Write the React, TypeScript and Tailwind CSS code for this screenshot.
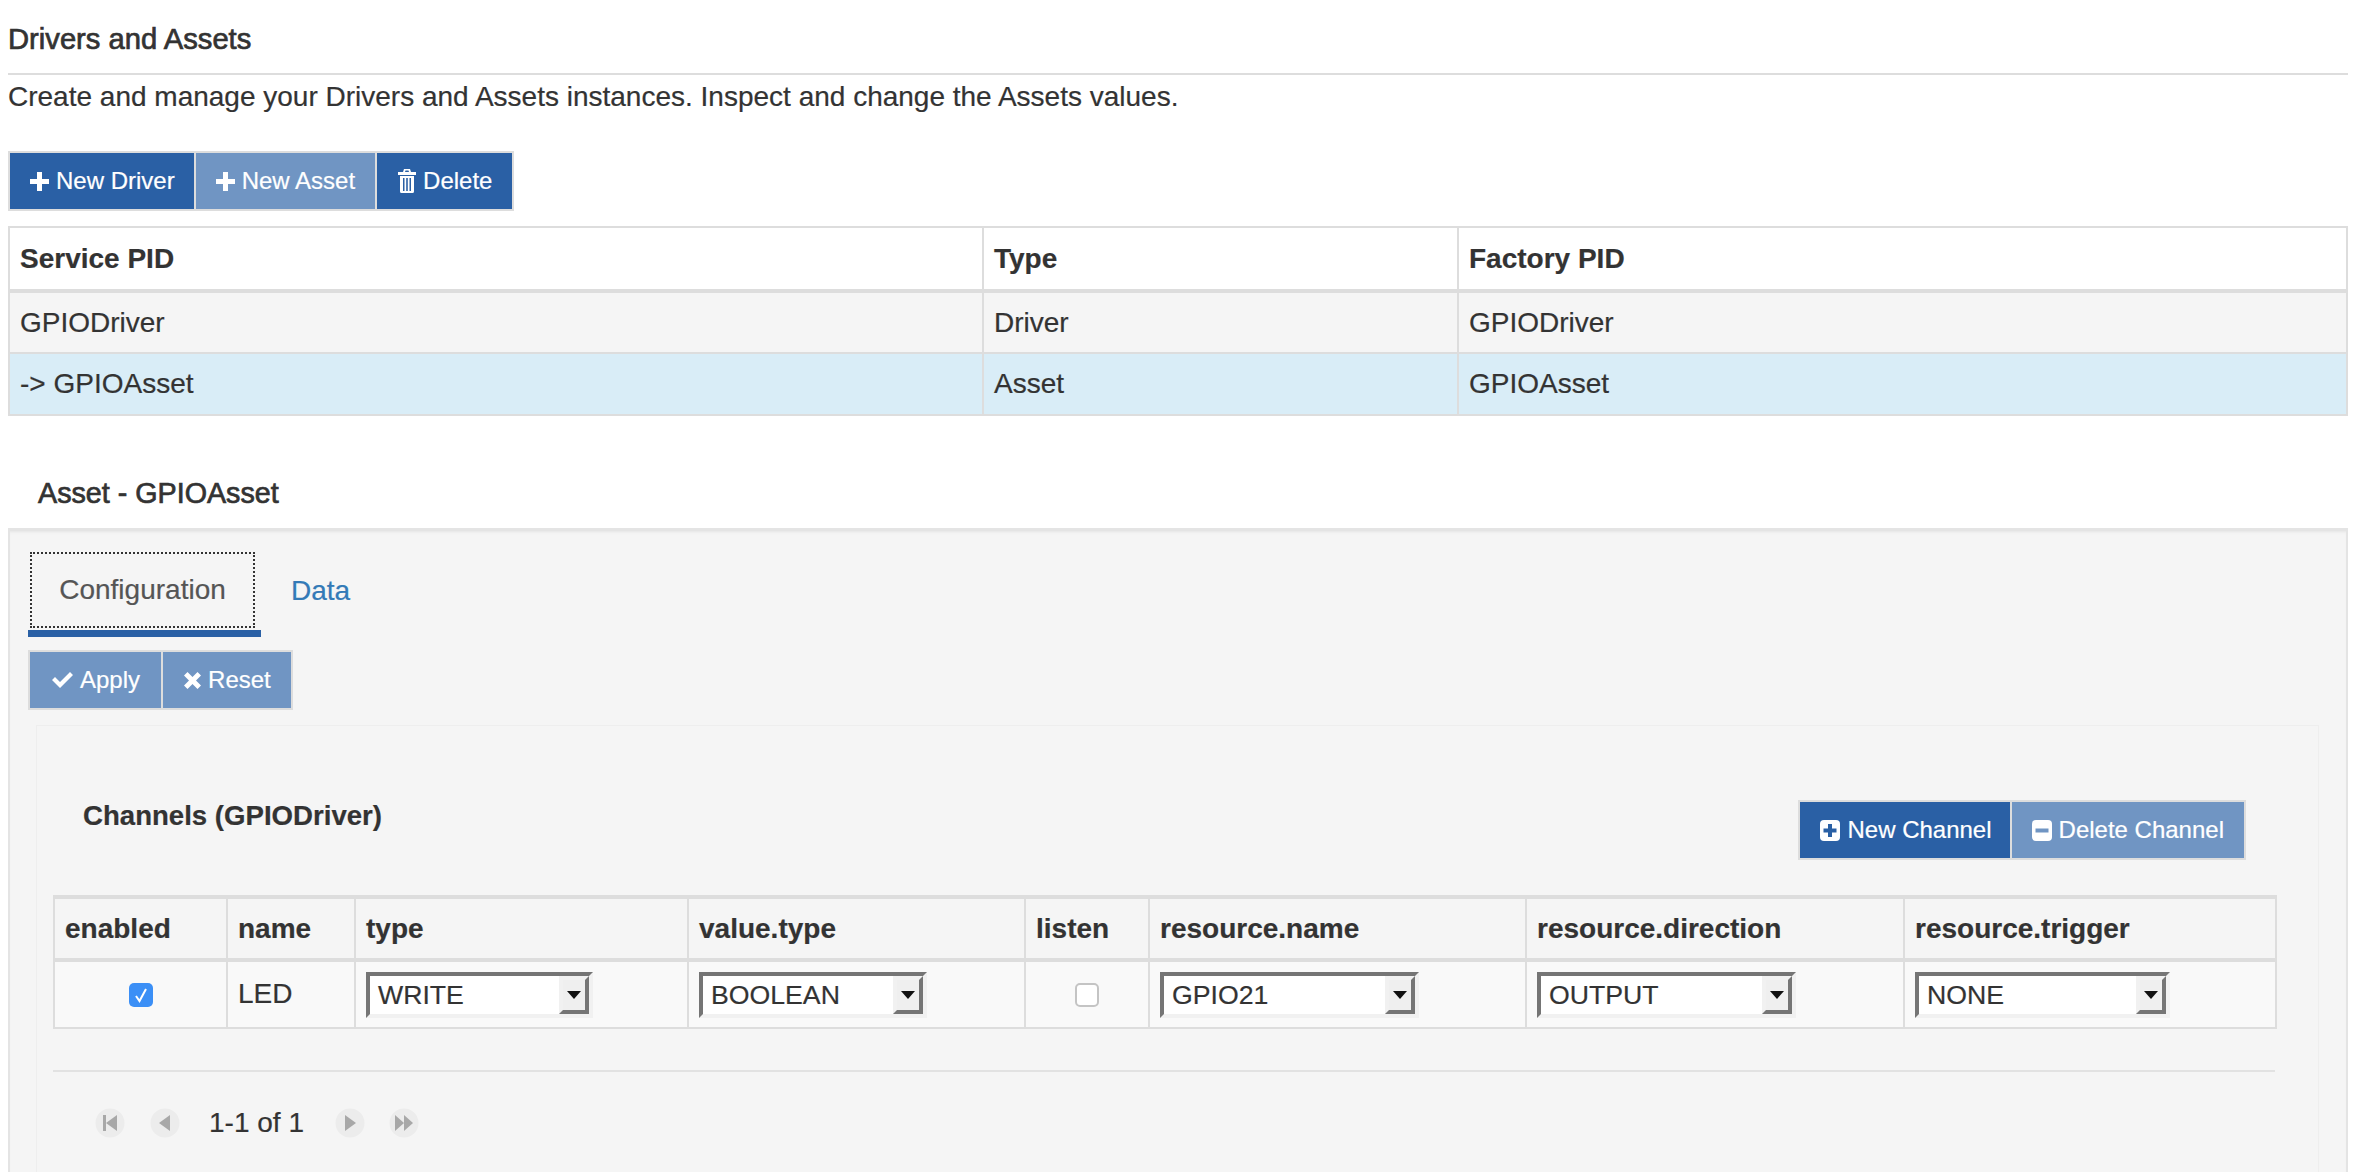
import * as React from "react";

const font = "font-['Liberation_Sans',Arial,sans-serif]";
const medium = "[-webkit-text-stroke:0.7px_#333]";

function PlusIcon() {
  return (
    <svg width="19" height="19" viewBox="0 0 19 19" fill="#fff">
      <path d="M7 0h5v7h7v5h-7v7H7v-7H0V7h7z" />
    </svg>
  );
}

function TrashIcon() {
  return (
    <svg width="18" height="24" viewBox="0 0 18 24" fill="#fff">
      <path d="M6 0h6l1 3h5v3H0V3h5zM7.500 1.500 7 3h4l-.5-1.500z" />
      <path fillRule="evenodd" d="M2 7h14v15.500a1.500 1.500 0 0 1-1.500 1.500h-11A1.500 1.500 0 0 1 2 22.500zM5 9v13h1.500V9zM8.200 9v13h1.600V9zM11.500 9v13H13V9z" />
    </svg>
  );
}

function CheckIcon() {
  return (
    <svg width="21" height="16" viewBox="0 0 21 16" fill="#fff">
      <path d="M8 16 0 8l3-3 5 5L18 0l3 3z" />
    </svg>
  );
}

function CrossIcon() {
  return (
    <svg width="17" height="17" viewBox="0 0 17 17" fill="#fff">
      <path d="M3.500 0 8.500 5l5-5L17 3.500l-5 5 5 5L13.500 17l-5-5-5 5L0 13.500l5-5-5-5z" />
    </svg>
  );
}

function PlusSignIcon() {
  return (
    <svg width="20" height="21" viewBox="0 0 20 21">
      <rect width="20" height="21" rx="4" fill="#fff" />
      <path d="M8 4h4v4.500h4.500v4H12V17H8v-4.500H3.500v-4H8z" fill="#2a60a5" />
    </svg>
  );
}

function MinusSignIcon() {
  return (
    <svg width="20" height="21" viewBox="0 0 20 21">
      <rect width="20" height="21" rx="4" fill="#fff" />
      <rect x="3.500" y="8.500" width="13" height="4" fill="#7095c3" />
    </svg>
  );
}

function ToolButton({
  label,
  icon,
  disabled,
  className,
}: {
  label: string;
  icon: React.ReactNode;
  disabled?: boolean;
  className?: string;
}) {
  return (
    <div
      className={`flex h-[56px] items-center gap-[7px] text-[24px] text-white ${
        disabled ? "bg-[#7095c3]" : "bg-[#2a60a5]"
      } ${className ?? ""}`}
    >
      {icon}
      <span>{label}</span>
    </div>
  );
}

function PagerIcon({ kind }: { kind: "first" | "prev" | "next" | "last" }) {
  return (
    <svg width="30" height="30" viewBox="0 0 30 30">
      <circle cx="15" cy="15" r="14.500" fill="#ececec" />
      <g fill="#a8a8a8">
        {kind === "first" && <path d="M8 7h3v16H8zM22 7v16L11 15z" />}
        {kind === "prev" && <path d="M20 7v16L9 15z" />}
        {kind === "next" && <path d="M10 7v16l11-8z" />}
        {kind === "last" && <path d="M6 7v16l9-8zM15 7v16l9-8z" />}
      </g>
    </svg>
  );
}

function FakeSelect({ value, width }: { value: string; width: string }) {
  return (
    <div
      className={`flex h-[46px] border-4 border-t-[#757575] border-r-[#f1f1f1] border-b-[#f1f1f1] border-l-[#757575] bg-white text-[26.67px] text-[#333] ${width}`}
    >
      <div className="flex-1 pl-2 leading-[38px]">{value}</div>
      <div className="flex w-[30px] items-center justify-center border-4 border-t-[#f1f1f1] border-r-[#757575] border-b-[#757575] border-l-[#f1f1f1] bg-[#efefef]">
        <svg width="14" height="8" viewBox="0 0 14 8" className="shrink-0">
          <path d="M0 0h14L7 8z" fill="#111" />
        </svg>
      </div>
    </div>
  );
}

const assets = [
  { pid: "GPIODriver", type: "Driver", factory: "GPIODriver", row: "bg-[#f5f5f5]" },
  { pid: "-> GPIOAsset", type: "Asset", factory: "GPIOAsset", row: "bg-[#d9edf7]" },
];

const channelCols = [
  { name: "enabled", w: "w-[173px]" },
  { name: "name", w: "w-[128px]" },
  { name: "type", w: "w-[333px]" },
  { name: "value.type", w: "w-[337px]" },
  { name: "listen", w: "w-[124px]" },
  { name: "resource.name", w: "w-[377px]" },
  { name: "resource.direction", w: "w-[378px]" },
  { name: "resource.trigger", w: "w-[372px]" },
];

const td = "border-x-2 border-b-2 border-[#ddd] px-[10px] align-middle";

export default function App() {
  return (
    <div className={`h-[1172px] overflow-hidden bg-white pr-5 pl-2 text-[28px] text-[#333] [-webkit-text-stroke-width:0.2px] ${font}`}>
      <div className={`border-b-2 border-[#ddd] pt-[24px] pb-[18px] text-[29.2px] leading-[31px] ${medium}`}>
        Drivers and Assets
      </div>
      <div className="mt-[6px] leading-[32px]">
        Create and manage your Drivers and Assets instances. Inspect and change the Assets values.
      </div>

      <div className="mt-[38px] flex w-fit border-2 border-[#ddd]">
        <ToolButton label="New Driver" icon={<PlusIcon />} className="pr-[19px] pl-5" />
        <ToolButton label="New Asset" icon={<PlusIcon />} disabled className="border-l-2 border-[#ddd] pr-5 pl-5" />
        <ToolButton label="Delete" icon={<TrashIcon />} className="gap-2 border-l-2 border-[#ddd] pr-5 pl-[21px]" />
      </div>

      <table className="mt-[15px] w-full table-fixed border-collapse">
        <thead>
          <tr className="h-[64px] bg-white text-left">
            <th className="w-[974px] border-x-2 border-t-2 border-b-4 border-[#ddd] px-[10px] font-bold">Service PID</th>
            <th className="w-[475px] border-x-2 border-t-2 border-b-4 border-[#ddd] px-[10px] font-bold">Type</th>
            <th className="border-x-2 border-t-2 border-b-4 border-[#ddd] px-[10px] font-bold">Factory PID</th>
          </tr>
        </thead>
        <tbody>
          {assets.map((a) => (
            <tr key={a.pid} className={`h-[62px] ${a.row}`}>
              <td className={td}>{a.pid}</td>
              <td className={td}>{a.type}</td>
              <td className={td}>{a.factory}</td>
            </tr>
          ))}
        </tbody>
      </table>

      <div className={`mt-[61px] pl-[30px] text-[28.7px] leading-[32px] ${medium}`}>Asset - GPIOAsset</div>

      <div className="mt-[19px] h-[700px] border-x-2 border-t-[3px] border-[#e4e4e4] bg-[#f5f5f5] pt-[21px] pl-[18px] shadow-[inset_0_3px_3px_-2px_#e4e4e4]">
        <div className="flex">
          <div className="w-[233px] border-b-[7px] border-[#2a60a5] pb-[2px]">
            <div className="ml-[2px] flex h-[76px] w-[225px] items-center justify-center border-2 border-dotted border-[#333] text-[#555]">
              Configuration
            </div>
          </div>
          <div className="ml-[30px] flex h-[78px] items-center text-[#337ab7]">Data</div>
        </div>

        <div className="mt-[13px] flex w-fit border-2 border-[#ddd]">
          <ToolButton label="Apply" icon={<CheckIcon />} disabled className="pr-[21px] pl-[22px]" />
          <ToolButton label="Reset" icon={<CrossIcon />} disabled className="gap-2 border-l-2 border-[#ddd] pr-[20px] pl-[21px]" />
        </div>

        <div className="mt-[15px] mr-[27px] ml-2 h-[500px] border border-[#eeeeee] bg-[#f5f5f5] pr-[43px] pl-4">
          <div className="flex items-start justify-between pr-[29px]">
            <div className="mt-[74px] pl-[30px] text-[27.6px] leading-[32px] font-bold">Channels (GPIODriver)</div>
            <div className="mt-[74px] flex border-2 border-[#ddd]">
              <ToolButton label="New Channel" icon={<PlusSignIcon />} className="pr-[18px] pl-5" />
              <ToolButton label="Delete Channel" icon={<MinusSignIcon />} disabled className="border-l-2 border-[#ddd] pr-5 pl-5" />
            </div>
          </div>

          <table className="mt-[35px] w-full table-fixed border-collapse">
            <thead>
              <tr className="h-[63px] bg-[#f5f5f5] text-left">
                {channelCols.map((c) => (
                  <th key={c.name} className={`${c.w} border-x-2 border-y-4 border-[#ddd] px-[10px] font-bold`}>
                    {c.name}
                  </th>
                ))}
              </tr>
            </thead>
            <tbody>
              <tr className="h-[68px] bg-[#f9f9f9]">
                <td className={td}>
                  <div className="mx-auto flex h-[24px] w-[24px] items-center justify-center rounded-[5px] bg-[#3b8ff6]">
                    <svg width="14" height="16" viewBox="0 0 14 16" fill="none">
                      <path d="M2 9l3.500 5L12 2" stroke="#fff" strokeWidth="2" />
                    </svg>
                  </div>
                </td>
                <td className={`${td} pb-[2px]`}>LED</td>
                <td className={td}>
                  <FakeSelect value="WRITE" width="w-[227px]" />
                </td>
                <td className={td}>
                  <FakeSelect value="BOOLEAN" width="w-[228px]" />
                </td>
                <td className={td}>
                  <div className="mx-auto h-[24px] w-[24px] rounded-[5px] border-2 border-[#c4c4c4] bg-white" />
                </td>
                <td className={td}>
                  <FakeSelect value="GPIO21" width="w-[259px]" />
                </td>
                <td className={td}>
                  <FakeSelect value="OUTPUT" width="w-[259px]" />
                </td>
                <td className={td}>
                  <FakeSelect value="NONE" width="w-[255px]" />
                </td>
              </tr>
            </tbody>
          </table>

          <div className="mt-[41px] flex items-center border-t-2 border-[#e2e2e2] pt-[36px] pl-[42px]">
            <PagerIcon kind="first" />
            <div className="ml-[25px]">
              <PagerIcon kind="prev" />
            </div>
            <div className="mr-[31px] ml-[29px] leading-[30px]">1-1 of 1</div>
            <PagerIcon kind="next" />
            <div className="ml-[24px]">
              <PagerIcon kind="last" />
            </div>
          </div>
        </div>
      </div>
    </div>
  );
}
